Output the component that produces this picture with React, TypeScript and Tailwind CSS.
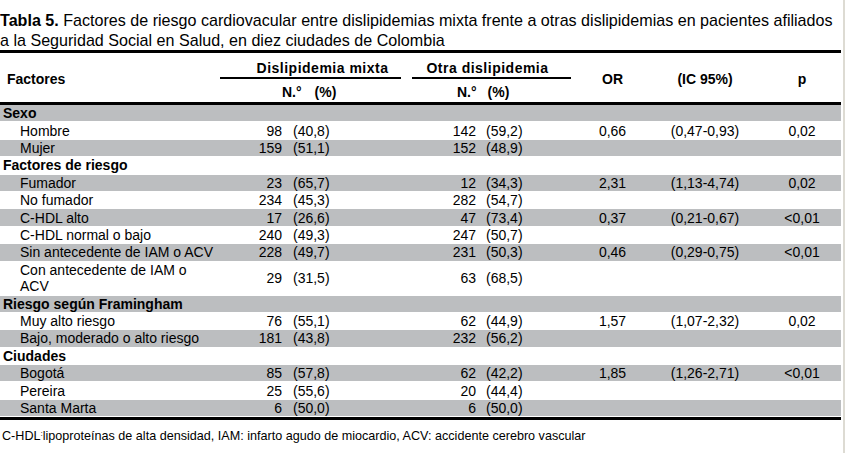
const rowGrid = "grid grid-cols-[220px_64px_117px_11px_66px_93px_82px_104px_84px] items-center";

type Row = {
  label: string;
  n1?: string;
  p1?: string;
  n2?: string;
  p2?: string;
  or?: string;
  ic?: string;
  p?: string;
  section?: boolean;
  gray?: boolean;
  tall?: boolean;
};

const rows: Row[] = [
  { label: "Sexo", section: true, gray: true },
  { label: "Hombre", n1: "98", p1: "(40,8)", n2: "142", p2: "(59,2)", or: "0,66", ic: "(0,47-0,93)", p: "0,02" },
  { label: "Mujer", n1: "159", p1: "(51,1)", n2: "152", p2: "(48,9)", gray: true },
  { label: "Factores de riesgo", section: true },
  { label: "Fumador", n1: "23", p1: "(65,7)", n2: "12", p2: "(34,3)", or: "2,31", ic: "(1,13-4,74)", p: "0,02", gray: true },
  { label: "No fumador", n1: "234", p1: "(45,3)", n2: "282", p2: "(54,7)" },
  { label: "C-HDL alto", n1: "17", p1: "(26,6)", n2: "47", p2: "(73,4)", or: "0,37", ic: "(0,21-0,67)", p: "<0,01", gray: true },
  { label: "C-HDL normal o bajo", n1: "240", p1: "(49,3)", n2: "247", p2: "(50,7)" },
  { label: "Sin antecedente de IAM o ACV", n1: "228", p1: "(49,7)", n2: "231", p2: "(50,3)", or: "0,46", ic: "(0,29-0,75)", p: "<0,01", gray: true },
  { label: "Con antecedente de IAM o|ACV", n1: "29", p1: "(31,5)", n2: "63", p2: "(68,5)", tall: true },
  { label: "Riesgo según Framingham", section: true, gray: true },
  { label: "Muy alto riesgo", n1: "76", p1: "(55,1)", n2: "62", p2: "(44,9)", or: "1,57", ic: "(1,07-2,32)", p: "0,02" },
  { label: "Bajo, moderado o alto riesgo", n1: "181", p1: "(43,8)", n2: "232", p2: "(56,2)", gray: true },
  { label: "Ciudades", section: true },
  { label: "Bogotá", n1: "85", p1: "(57,8)", n2: "62", p2: "(42,2)", or: "1,85", ic: "(1,26-2,71)", p: "<0,01", gray: true },
  { label: "Pereira", n1: "25", p1: "(55,6)", n2: "20", p2: "(44,4)" },
  { label: "Santa Marta", n1: "6", p1: "(50,0)", n2: "6", p2: "(50,0)", gray: true },
];

function DataRow({ r }: { r: Row }) {
  const lines = r.label.split("|");
  return (
    <div
      className={`${rowGrid} ${r.tall ? "h-[34px]" : "h-[17.4px]"} ${
        r.gray ? "bg-[#bcbec0]" : ""
      } border-b-[1.5px] border-white leading-[16px]`}
    >
      <div className={r.section ? "pl-[3px] font-bold" : "pl-[20px]"}>
        {lines.map((l, i) => (
          <div key={i}>{l}</div>
        ))}
      </div>
      <div className="text-right pr-[2px]">{r.n1}</div>
      <div className="pl-[9px]">{r.p1}</div>
      <div />
      <div className="text-right pr-[2px]">{r.n2}</div>
      <div className="pl-[8px]">{r.p2}</div>
      <div className="text-center pl-[1px]">{r.or}</div>
      <div className="text-center">{r.ic}</div>
      <div className="text-center pl-[6px]">{r.p}</div>
    </div>
  );
}

export default function App() {
  return (
    <div className="flex min-h-screen w-[850px] bg-white text-black font-['Liberation_Sans',Arial,sans-serif]">
      <div className="w-[841px]">
        <div className="pt-[10px] text-[16.1px] leading-[20px] whitespace-nowrap">
          <div>
            <span className="font-bold">Tabla 5.</span> Factores de riesgo cardiovacular entre dislipidemias mixta frente a otras dislipidemias en pacientes afiliados
          </div>
          <div>a la Seguridad Social en Salud, en diez ciudades de Colombia</div>
        </div>
        <div className="h-[3px] bg-black" />
        <div className={`${rowGrid} h-[49px] text-[14px] font-bold`}>
          <div className="pl-[7px] pt-[2px]">Factores</div>
          <div className="col-span-2 flex flex-col h-full">
            <div className="pt-[5px] h-[24px] pl-[24px] text-center tracking-[0.5px]">Dislipidemia mixta</div>
            <div className="h-[2px] bg-black" />
            <div className="pt-[3px] pl-[62px] flex gap-[13px]">
              <span>N.°</span>
              <span>(%)</span>
            </div>
          </div>
          <div />
          <div className="col-span-2 flex flex-col h-full">
            <div className="pt-[5px] h-[24px] pr-[8px] text-center tracking-[0.5px]">Otra dislipidemia</div>
            <div className="h-[2px] bg-black" />
            <div className="pt-[3px] pl-[45px] flex gap-[11px]">
              <span>N.°</span>
              <span>(%)</span>
            </div>
          </div>
          <div className="text-center pl-[1px] pt-[2px]">OR</div>
          <div className="text-center pt-[2px]">(IC 95%)</div>
          <div className="text-center pl-[6px] pt-[2px]">p</div>
        </div>
        <div className="h-[3px] bg-black" />
        <div className="text-[14px]">
          {rows.map((r, i) => (
            <DataRow key={i} r={r} />
          ))}
        </div>
        <div className="h-[3px] bg-black" />
        <div className="pl-[2px] pt-[8px] text-[12.6px] leading-[16px]">
          C-HDL<sup className="text-[8px]">:</sup>lipoproteínas de alta densidad, IAM: infarto agudo de miocardio, ACV: accidente cerebro vascular
        </div>
      </div>
      <div className="ml-[2px] w-[2px] bg-[#dddbd3]" />
    </div>
  );
}
